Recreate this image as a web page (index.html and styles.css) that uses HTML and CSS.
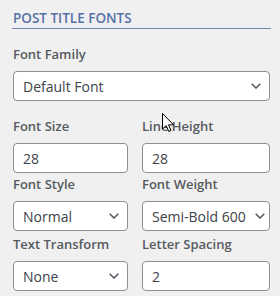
FILE: index.html
```html
<!DOCTYPE html>
<html>
<head>
<meta charset="utf-8">
<link rel="stylesheet" href="styles.css">
</head>
<body>
<div class="panel">
  <h2 class="title">POST TITLE FONTS</h2>
  <div class="group group-family">
    <div class="label">Font Family</div>
    <div class="control select">
      <span>Default Font</span>
      <svg class="chev" width="10" height="6" viewBox="0 0 10 6"><path d="M0.7 0.7 L5 5 L9.3 0.7" fill="none" stroke="#50575e" stroke-width="1.5"/></svg>
    </div>
  </div>
  <div class="grid">
    <div class="cell">
      <div class="label">Font Size</div>
      <div class="control"><span>28</span></div>
    </div>
    <div class="cell">
      <div class="label">Line Height</div>
      <div class="control"><span>28</span></div>
    </div>
    <div class="cell">
      <div class="label">Font Style</div>
      <div class="control select">
        <span>Normal</span>
        <svg class="chev" width="10" height="6" viewBox="0 0 10 6"><path d="M0.7 0.7 L5 5 L9.3 0.7" fill="none" stroke="#50575e" stroke-width="1.5"/></svg>
      </div>
    </div>
    <div class="cell">
      <div class="label">Font Weight</div>
      <div class="control select tight">
        <span>Semi-Bold 600</span>
        <svg class="chev" width="10" height="6" viewBox="0 0 10 6"><path d="M0.7 0.7 L5 5 L9.3 0.7" fill="none" stroke="#50575e" stroke-width="1.5"/></svg>
      </div>
    </div>
    <div class="cell">
      <div class="label">Text Transform</div>
      <div class="control select">
        <span>None</span>
        <svg class="chev" width="10" height="6" viewBox="0 0 10 6"><path d="M0.7 0.7 L5 5 L9.3 0.7" fill="none" stroke="#50575e" stroke-width="1.5"/></svg>
      </div>
    </div>
    <div class="cell">
      <div class="label">Letter Spacing</div>
      <div class="control"><span>2</span></div>
    </div>
  </div>
  <svg class="cursor" width="13" height="20" viewBox="0 0 13 20"><path d="M0.5 0.5 L0.5 16 L4.2 12.6 L6.8 18.5 L9 17.5 L6.5 11.8 L11.5 11.8 Z" fill="#fff" stroke="#000" stroke-width="1" stroke-linejoin="round"/></svg>
</div>
</body>
</html>
```
FILE: styles.css
```css
* { box-sizing: border-box; }
html, body { margin: 0; padding: 0; }
body {
  background: #f0f0f0;
  font-family: "Open Sans", "Noto Sans", sans-serif;
  width: 280px;
  height: 296px;
  overflow: hidden;
}
.panel {
  position: relative;
  padding: 0 10px 0 13px;
}
.title {
  margin: 0 -1px 0 -1px;
  padding: 8px 0 0 1px;
  font-size: 13.5px;
  line-height: 20px;
  font-weight: 600;
  color: #5571a8;
  border-bottom: 1px solid #7287b3;
  height: 29px;
}
.label {
  font-size: 13px;
  line-height: 20px;
  font-weight: 600;
  color: #555a60;
  margin-bottom: 7px;
}
.group-family {
  margin-top: 15px;
  margin-bottom: 15px;
}
.grid {
  display: grid;
  grid-template-columns: 115px 128px;
  column-gap: 14px;
}
.cell:nth-child(3), .cell:nth-child(4) { margin-top: 1px; }
.cell:nth-child(5), .cell:nth-child(6) { margin-top: 3px; }
.control {
  height: 30px;
  background: #fff;
  border: 1px solid #8c8f94;
  border-radius: 4px;
  display: flex;
  align-items: center;
  justify-content: space-between;
  padding: 0 8px 0 9px;
  font-size: 14px;
  color: #3c434a;
}
.control.tight { padding-right: 4px; }
.chev { flex: none; }
.cursor {
  position: absolute;
  left: 162px;
  top: 113px;
}
```
